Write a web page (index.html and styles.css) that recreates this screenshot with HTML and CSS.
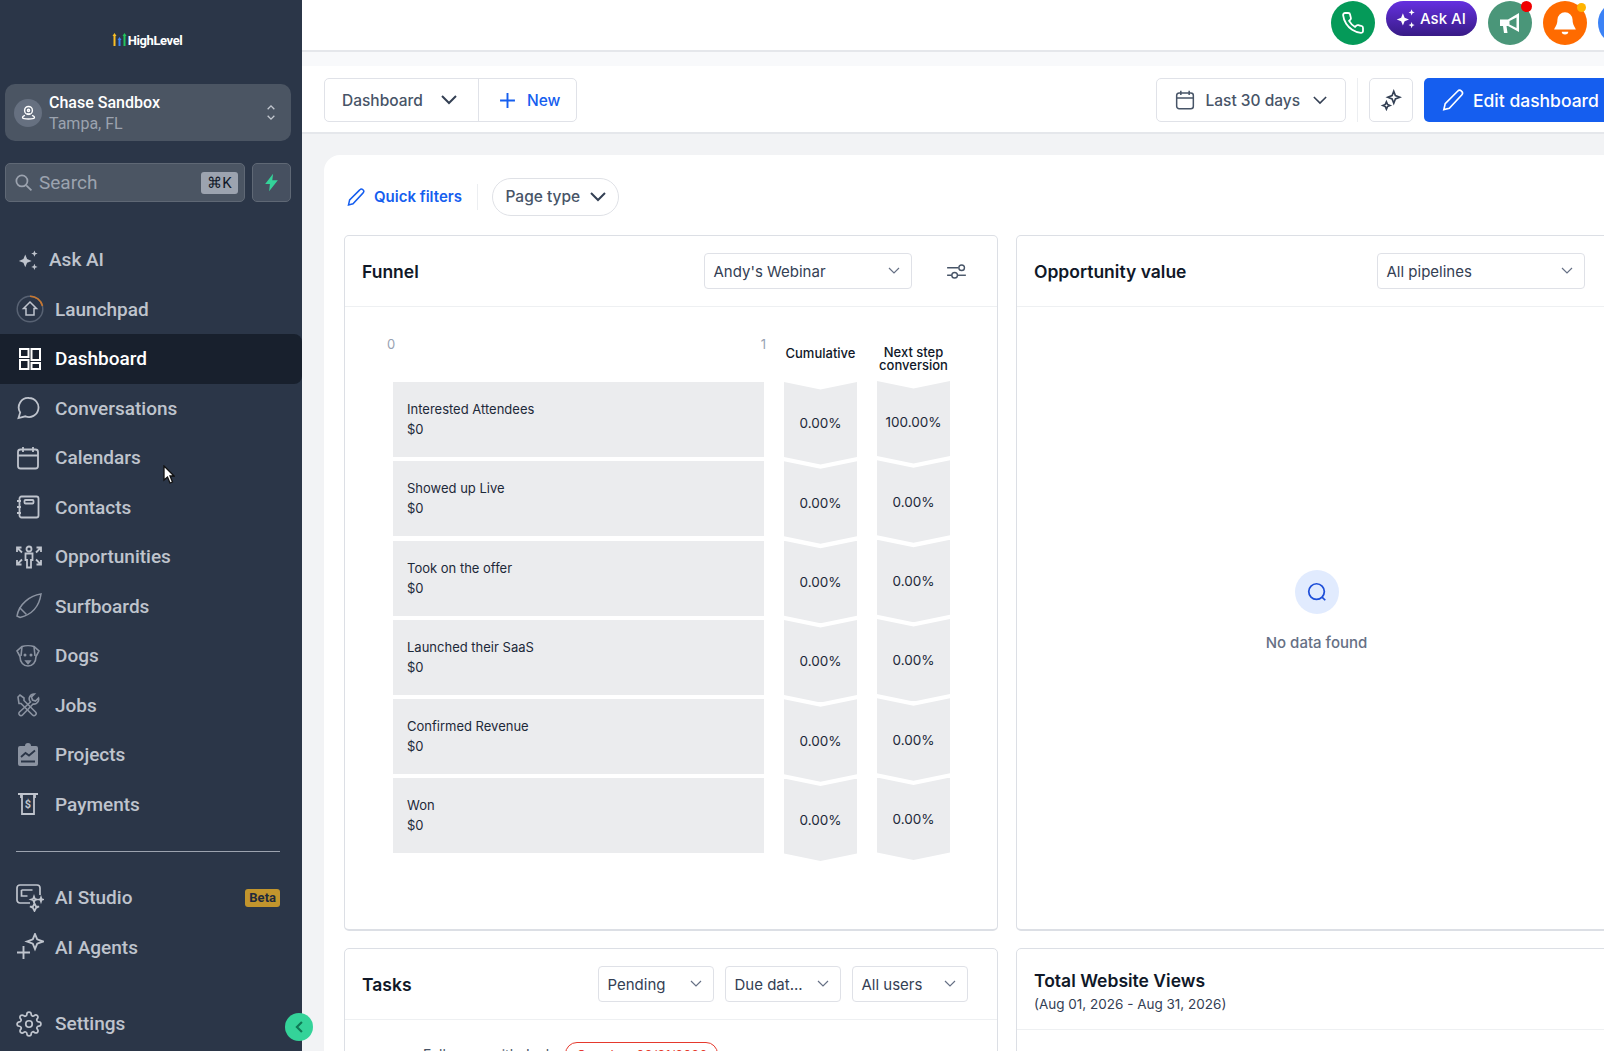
FILE: index.html
```html
<!DOCTYPE html>
<html lang="en">
<head>
  <meta charset="UTF-8" />
  <title>Dashboard</title>
  <link rel="stylesheet" href="styles.css">
</head>
<body>
<div class="app">

  <!-- Sidebar -->
  <aside class="sidebar">
    <div class="logo">
      <svg class="logo-mark" viewBox="0 0 15 14" width="15" height="14" fill="none" stroke-width="2">
        <path d="M2.5 14V3" stroke="#fbbf24"/><path d="M0.5 4l2-3 2 3z" fill="#fbbf24"/>
        <path d="M7.5 14V7" stroke="#3b82f6"/><path d="M5.5 8l2-3 2 3z" fill="#3b82f6"/>
        <path d="M12.5 14V3" stroke="#22c55e"/><path d="M10.5 4l2-3 2 3z" fill="#22c55e"/>
      </svg>
      <span>HighLevel</span>
    </div>

    <div class="location">
      <span class="location-pin">
        <svg viewBox="0 0 24 24" width="17" height="17" fill="none" stroke="#fff" stroke-width="2"><circle cx="12" cy="9" r="5.5"/><circle cx="12" cy="9" r="1.5"/><path d="M12 15l-2-1.5M12 15l2-1.5M7 16c-3 1-4 2.500-3 4 1 1.500 15 1.500 16 0 1-1.500 0-3-3-4"/></svg>
      </span>
      <div class="location-text">
        <div class="location-name">Chase Sandbox</div>
        <div class="location-city">Tampa, FL</div>
      </div>
      <svg class="location-toggle" viewBox="0 0 12 22" width="10" height="19" fill="none" stroke="#c3c8d0" stroke-width="1.6"><path d="M2 7l4-4 4 4M2 15l4 4 4-4"/></svg>
    </div>

    <div class="search-row">
      <div class="search">
        <svg viewBox="0 0 24 24" width="19" height="19" fill="none" stroke="#9ca3af" stroke-width="2.200"><circle cx="10" cy="10" r="7"/><path d="M15.500 15.500L22 22"/></svg>
        <span class="search-label">Search</span>
        <span class="kbd">⌘K</span>
      </div>
      <button class="bolt">
        <svg viewBox="0 0 24 24" width="19" height="19" fill="#34d399"><path d="M14 1L4 14h6l-1 9 11-14h-7z"/></svg>
      </button>
    </div>

    <nav class="nav">
      <a class="nav-item nav-ask">
        <span class="nav-icon"><svg viewBox="0 0 24 24" width="22" height="22" fill="currentColor"><path d="M9 6l2 5 5 2-5 2-2 5-2-5-5-2 5-2z"/><path d="M19 1.500l1 2.500 2.500 1-2.500 1-1 2.500-1-2.500-2.500-1 2.500-1zM19 16l1 2.500 2.500 1-2.500 1-1 2.500-1-2.500-2.500-1 2.500-1z"/></svg></span>
        Ask AI
      </a>
      <a class="nav-item">
        <span class="nav-icon"><svg viewBox="0 0 28 28" width="28" height="28" fill="none" stroke-width="1.500"><circle cx="14" cy="14" r="12.800" stroke="#586273"/><path d="M14 1.200A12.800 12.800 0 0 1 26.500 11" stroke="#c8772f"/><path d="M14 7l6.500 6.500H18V20h-8v-6.500H7.500z" stroke="currentColor"/></svg></span>
        Launchpad
      </a>
      <a class="nav-item active">
        <span class="nav-icon"><svg viewBox="0 0 24 24" width="24" height="24" fill="none" stroke="currentColor" stroke-width="2"><rect x="2" y="2" width="8.500" height="8"/><rect x="13.500" y="2" width="8.500" height="11"/><rect x="2" y="13" width="8.500" height="9"/><rect x="13.500" y="16" width="8.500" height="6"/></svg></span>
        Dashboard
      </a>
      <a class="nav-item">
        <span class="nav-icon"><svg viewBox="0 0 24 24" width="24" height="24" fill="none" stroke="currentColor" stroke-width="1.800"><path d="M13 2a9.500 9.500 0 1 1-3.600 18.300L2.500 22l1.700-5.500A9.500 9.500 0 0 1 13 2z"/></svg></span>
        Conversations
      </a>
      <a class="nav-item">
        <span class="nav-icon"><svg viewBox="0 0 24 24" width="24" height="24" fill="none" stroke="currentColor" stroke-width="1.800"><rect x="2" y="3.500" width="20" height="19" rx="2.500"/><path d="M2 9.500h20M7 1v5M17 1v5"/></svg></span>
        Calendars
      </a>
      <a class="nav-item">
        <span class="nav-icon"><svg viewBox="0 0 24 24" width="24" height="24" fill="none" stroke="currentColor" stroke-width="1.800"><rect x="3.500" y="1.500" width="19" height="21" rx="2"/><rect x="8.500" y="5" width="9" height="3.500" rx="1"/><path d="M1 6h4M1 12h4M1 18h4"/></svg></span>
        Contacts
      </a>
      <a class="nav-item">
        <span class="nav-icon"><svg viewBox="0 0 26 26" width="26" height="26" fill="none" stroke="currentColor" stroke-width="1.800"><circle cx="13" cy="5" r="2.500"/><path d="M9.500 9.500h7V16H15v7.500h-4V16H9.500zM1 8V3.500h4.500M1.500 4L6 8.500M25 8V3.500h-4.500M24.500 4L20 8.500M1 16v4.500h4.500M1.500 20L6 15.500M25 16v4.500h-4.500M24.500 20L20 15.500"/></svg></span>
        Opportunities
      </a>
      <a class="nav-item">
        <span class="nav-icon nav-dim"><svg viewBox="0 0 26 26" width="26" height="26" fill="none" stroke="currentColor" stroke-width="1.500"><path d="M1 23l3 1.500C14 22 23 15 25 1 14 2.500 3 11 1 23z"/><path d="M3.500 14.500l7 7"/></svg></span>
        Surfboards
      </a>
      <a class="nav-item">
        <span class="nav-icon nav-dim"><svg viewBox="0 0 24 24" width="24" height="24" fill="none" stroke="currentColor" stroke-width="1.600"><path d="M6 2.500c3-1 9-1 12 0l5 4.500-3 5.500c0 6-3.500 9.500-8 9.500s-8-3.500-8-9.500L1 7z"/><path d="M6 2.500L5 12M18 2.500l1 9.500M10 17h4l-2 2.500z"/><circle cx="9" cy="11" r=".7"/><circle cx="15" cy="11" r=".7"/></svg></span>
        Dogs
      </a>
      <a class="nav-item">
        <span class="nav-icon nav-dim"><svg viewBox="0 0 24 24" width="24" height="24" fill="none" stroke="currentColor" stroke-width="1.600"><path d="M2 4l2-2 4 3v2.500l11.500 11.500a2 2 0 0 1-3 3L5 10.500H3z"/><path d="M14.500 9L3.500 19a2 2 0 0 0 3 3L17 11a4.800 4.800 0 0 0 5.500-6l-3 3-3-1-1-3 3-3a4.800 4.800 0 0 0-4 8z"/></svg></span>
        Jobs
      </a>
      <a class="nav-item">
        <span class="nav-icon nav-dim"><svg viewBox="0 0 24 24" width="24" height="24"><path fill="currentColor" d="M4 3h5a3 3 0 0 1 6 0h5a2 2 0 0 1 2 2v16a2 2 0 0 1-2 2H4a2 2 0 0 1-2-2V5a2 2 0 0 1 2-2z"/><path fill="none" stroke="#2b3648" stroke-width="1.800" d="M5 14l4.500-4 3.500 2.500L19 7.500M5 18.500h14"/></svg></span>
        Projects
      </a>
      <a class="nav-item">
        <span class="nav-icon"><svg viewBox="0 0 24 24" width="24" height="24" fill="none" stroke="currentColor" stroke-width="1.800"><path d="M2 2h20M5 2v4M19 2v4M6 2v20h12V2"/><text x="12" y="16" text-anchor="middle" fill="currentColor" stroke="none" font-size="11" font-weight="700" font-family="Roboto, sans-serif">$</text></svg></span>
        Payments
      </a>

      <div class="nav-divider"></div>

      <a class="nav-item">
        <span class="nav-icon"><svg viewBox="0 0 28 28" width="28" height="28" fill="none" stroke="currentColor" stroke-width="1.700"><path d="M14 19H4a3 3 0 0 1-3-3V4a3 3 0 0 1 3-3h17a3 3 0 0 1 3 3v7"/><path d="M5.500 6h11M5.500 6v6h6"/><path d="M18 13l.8 2.200 2.200.8-2.200.8-.8 2.200-.8-2.200-2.200-.8 2.200-.8zM25 14l.5 1.500 1.500.5-1.500.5-.5 1.500-.5-1.500-1.500-.5 1.500-.5zM18.500 20l1.500 3 3-.0-3 1.500-1.500 3-1.500-3-3-1.500 3 .0z" transform="translate(0 -.5)"/></svg></span>
        AI Studio
        <span class="beta">Beta</span>
      </a>
      <a class="nav-item">
        <span class="nav-icon"><svg viewBox="0 0 28 28" width="28" height="28" fill="none" stroke="currentColor" stroke-width="1.900"><path d="M19 1l2.200 5.300L27 8.500l-5.800 2.200L19 16l-2.200-5.300L11 8.500l5.800-2.200z"/><path d="M7.500 13v13M1 19.500h13"/></svg></span>
        AI Agents
      </a>
      <a class="nav-item nav-settings">
        <span class="nav-icon"><svg viewBox="0 0 24 24" width="26" height="26" fill="none" stroke="currentColor" stroke-width="1.600"><circle cx="12" cy="12" r="3"/><path d="M19.400 15a1.650 1.650 0 0 0 .33 1.820l.06.06a2 2 0 0 1 0 2.830 2 2 0 0 1-2.830 0l-.06-.06a1.650 1.650 0 0 0-1.820-.33 1.650 1.650 0 0 0-1 1.510V21a2 2 0 0 1-2 2 2 2 0 0 1-2-2v-.09A1.650 1.650 0 0 0 9 19.400a1.650 1.650 0 0 0-1.820.33l-.06.06a2 2 0 0 1-2.830 0 2 2 0 0 1 0-2.830l.06-.06a1.650 1.650 0 0 0 .33-1.820 1.650 1.650 0 0 0-1.510-1H3a2 2 0 0 1-2-2 2 2 0 0 1 2-2h.09A1.650 1.650 0 0 0 4.600 9a1.650 1.650 0 0 0-.33-1.820l-.06-.06a2 2 0 0 1 0-2.830 2 2 0 0 1 2.830 0l.06.06a1.650 1.650 0 0 0 1.820.33H9a1.650 1.650 0 0 0 1-1.510V3a2 2 0 0 1 2-2 2 2 0 0 1 2 2v.09a1.650 1.650 0 0 0 1 1.510 1.650 1.650 0 0 0 1.820-.33l.06-.06a2 2 0 0 1 2.830 0 2 2 0 0 1 0 2.830l-.06.06a1.650 1.650 0 0 0-.33 1.820V9a1.650 1.650 0 0 0 1.510 1H21a2 2 0 0 1 2 2 2 2 0 0 1-2 2h-.09a1.650 1.650 0 0 0-1.510 1z"/></svg></span>
        Settings
      </a>
    </nav>

    <button class="collapse">
      <svg viewBox="0 0 12 16" width="10" height="14" fill="none" stroke="#0f7a55" stroke-width="2.600"><path d="M9.500 2l-6 6 6 6"/></svg>
    </button>
  </aside>

  <!-- Main -->
  <main class="main">
    <header class="topbar">
      <span class="round round-phone">
        <svg viewBox="0 0 24 24" width="24" height="24" fill="none" stroke="#fff" stroke-width="1.800"><path d="M22 16.920v3a2 2 0 0 1-2.180 2 19.790 19.790 0 0 1-8.630-3.070 19.500 19.500 0 0 1-6-6 19.790 19.790 0 0 1-3.070-8.670A2 2 0 0 1 4.110 2h3a2 2 0 0 1 2 1.720 12.840 12.840 0 0 0 .7 2.810 2 2 0 0 1-.45 2.110L8.090 9.910a16 16 0 0 0 6 6l1.270-1.270a2 2 0 0 1 2.110-.45 12.840 12.840 0 0 0 2.810.7A2 2 0 0 1 22 16.920z"/></svg>
      </span>
      <span class="ask-pill">
        <svg viewBox="0 0 24 24" width="21" height="21" fill="#fff"><path d="M9 6l2 5 5 2-5 2-2 5-2-5-5-2 5-2z"/><path d="M19 1.500l1 2.500 2.500 1-2.500 1-1 2.500-1-2.500-2.500-1 2.500-1zM19 16l1 2.500 2.500 1-2.500 1-1 2.500-1-2.500-2.500-1 2.500-1z"/></svg>
        Ask AI
      </span>
      <span class="round round-news">
        <svg viewBox="0 0 24 24" width="24" height="24" fill="#fff"><path d="M2 8.500h8L21 2v19l-11-6H8.500l1 7H6l-1-7H2z"/><path d="M18.500 6.500L11.500 10v3.500l7 3.500z" fill="#4a9679"/></svg>
        <i class="dot dot-red"></i>
      </span>
      <span class="round round-bell">
        <svg viewBox="0 0 24 24" width="26" height="26" fill="#fff"><path d="M12 2a7 7 0 0 0-7 7c0 5-2.500 7-3 9h20c-.5-2-3-4-3-9a7 7 0 0 0-7-7z"/><path d="M9 20h6a3 2.500 0 0 1-6 0z"/></svg>
        <i class="dot dot-amber"></i>
      </span>
      <span class="round round-user"></span>
    </header>
    <div class="strip"></div>

    <div class="toolbar">
      <div class="split">
        <button class="split-main">
          Dashboard
          <svg viewBox="0 0 16 10" width="16" height="10" fill="none" stroke="#344054" stroke-width="2"><path d="M1 1l7 7 7-7"/></svg>
        </button>
        <button class="split-new">
          <svg viewBox="0 0 16 16" width="17" height="17" fill="none" stroke="#155eef" stroke-width="1.800"><path d="M8 1v14M1 8h14"/></svg>
          New
        </button>
      </div>
      <div class="toolbar-right">
        <button class="range">
          <svg viewBox="0 0 24 24" width="20" height="20" fill="none" stroke="#475467" stroke-width="1.800"><rect x="2" y="3.500" width="20" height="19" rx="3"/><path d="M2 9.500h20M7 1v5M17 1v5"/></svg>
          Last 30 days
          <svg viewBox="0 0 16 10" width="14" height="9" fill="none" stroke="#344054" stroke-width="1.800"><path d="M1 1l7 7 7-7"/></svg>
        </button>
        <span class="toolbar-sep"></span>
        <button class="magic">
          <svg viewBox="0 0 24 24" width="22" height="22" fill="none" stroke="#344054" stroke-width="1.800"><path d="M15 2.500l1.800 4.700 4.700 1.800-4.700 1.800L15 15.500l-1.800-4.700L8.500 9l4.700-1.800zM7 14l1.200 2.800L11 18l-2.800 1.200L7 22l-1.200-2.800L3 18l2.800-1.200z"/></svg>
        </button>
        <button class="edit">
          <svg viewBox="0 0 24 24" width="22" height="22" fill="none" stroke="#fff" stroke-width="1.800"><path d="M17 2.500a3 3 0 0 1 4.500 4L8 21l-6 1.500L3.500 16z"/></svg>
          Edit dashboard
        </button>
      </div>
    </div>

    <section class="panel">
      <div class="filters">
        <a class="quick">
          <svg viewBox="0 0 24 24" width="18" height="18" fill="none" stroke="#155eef" stroke-width="2"><path d="M17 2.500a3 3 0 0 1 4.500 4L8 21l-6 1.500L3.500 16z"/></svg>
          Quick filters
        </a>
        <span class="filters-sep"></span>
        <button class="pill">
          Page type
          <svg viewBox="0 0 16 10" width="16" height="10" fill="none" stroke="#344054" stroke-width="2"><path d="M1 1l7 7 7-7"/></svg>
        </button>
      </div>

      <div class="cards">
        <!-- Funnel -->
        <div class="card card-tall">
          <div class="card-head">
            <h3>Funnel</h3>
            <div class="head-tools">
              <div class="select select-wide">Andy's Webinar<svg viewBox="0 0 12 8" width="12" height="8" fill="none" stroke="#667085" stroke-width="1.200"><path d="M1 1l5 5 5-5"/></svg></div>
              <svg class="tune" viewBox="0 0 20 16" width="19" height="15" fill="none" stroke="#475467" stroke-width="1.500"><path d="M0 4h12M0 12h5"/><circle cx="15.500" cy="4" r="3"/><circle cx="8" cy="12" r="3"/><path d="M11 12h9"/></svg>
            </div>
          </div>
          <div class="funnel">
            <div class="funnel-bars">
              <div class="axis"><span>0</span><span>1</span></div>
              <div class="bar"><span>Interested Attendees</span><span>$0</span></div>
              <div class="bar"><span>Showed up Live</span><span>$0</span></div>
              <div class="bar"><span>Took on the offer</span><span>$0</span></div>
              <div class="bar"><span>Launched their SaaS</span><span>$0</span></div>
              <div class="bar"><span>Confirmed Revenue</span><span>$0</span></div>
              <div class="bar"><span>Won</span><span>$0</span></div>
            </div>
            <div class="funnel-col">
              <div class="col-head">Cumulative</div>
              <div class="chev">0.00%</div>
              <div class="chev">0.00%</div>
              <div class="chev">0.00%</div>
              <div class="chev">0.00%</div>
              <div class="chev">0.00%</div>
              <div class="chev">0.00%</div>
            </div>
            <div class="funnel-col funnel-col-next">
              <div class="col-head">Next step<br>conversion</div>
              <div class="chev">100.00%</div>
              <div class="chev">0.00%</div>
              <div class="chev">0.00%</div>
              <div class="chev">0.00%</div>
              <div class="chev">0.00%</div>
              <div class="chev">0.00%</div>
            </div>
          </div>
        </div>

        <!-- Opportunity value -->
        <div class="card card-tall">
          <div class="card-head">
            <h3>Opportunity value</h3>
            <div class="select select-wide">All pipelines<svg viewBox="0 0 12 8" width="12" height="8" fill="none" stroke="#667085" stroke-width="1.200"><path d="M1 1l5 5 5-5"/></svg></div>
          </div>
          <div class="empty">
            <span class="empty-icon">
              <svg viewBox="0 0 24 24" width="22" height="22" fill="none" stroke="#1d4ed8" stroke-width="1.900"><circle cx="11.500" cy="11.500" r="8.500"/><path d="M17.500 17.500L21 21"/></svg>
            </span>
            <span class="empty-text">No data found</span>
          </div>
        </div>

        <!-- Tasks -->
        <div class="card">
          <div class="card-head card-head-tasks">
            <h3>Tasks</h3>
            <div class="head-tools head-tools-tight">
              <div class="select">Pending<svg viewBox="0 0 12 8" width="12" height="8" fill="none" stroke="#667085" stroke-width="1.200"><path d="M1 1l5 5 5-5"/></svg></div>
              <div class="select">Due dat...<svg viewBox="0 0 12 8" width="12" height="8" fill="none" stroke="#667085" stroke-width="1.200"><path d="M1 1l5 5 5-5"/></svg></div>
              <div class="select">All users<svg viewBox="0 0 12 8" width="12" height="8" fill="none" stroke="#667085" stroke-width="1.200"><path d="M1 1l5 5 5-5"/></svg></div>
            </div>
          </div>
          <div class="task">
            <span class="task-name">Follow up with Jack</span>
            <span class="task-due">Overdue: 08/31/2026</span>
          </div>
        </div>

        <!-- Total Website Views -->
        <div class="card">
          <div class="card-head card-head-views">
            <h3>Total Website Views</h3>
            <p>(Aug 01, 2026 - Aug 31, 2026)</p>
          </div>
        </div>
      </div>
    </section>
  </main>
</div>

<!-- mouse pointer caught in the capture -->
<svg class="pointer" viewBox="0 0 12 19" width="12" height="19"><path d="M1 1v14l3.500-3 2.500 6 2.500-1-2.500-6H11z" fill="#fff" stroke="#111" stroke-width="1.300"/></svg>

</body>
</html>
```

FILE: styles.css
```css
* {
  box-sizing: border-box;
}
html, body {
  margin: 0;
  padding: 0;
  height: 100%;
  overflow: hidden;
  font-family: 'Inter', 'Liberation Sans', sans-serif;
  background-color: #f2f3f5;
  color: #101828;
}
button {
  font-family: inherit;
  cursor: pointer;
}
h3 {
  margin: 0;
  font-size: 17.5px;
  font-weight: 600;
  color: #101828;
}
.app {
  display: flex;
  height: 1051px;
  width: 1642px;
}

/* sidebar */
.sidebar {
  position: relative;
  z-index: 2;
  flex: 0 0 302px;
  background-color: #2b3648;
  font-family: 'Roboto', 'Liberation Sans', sans-serif;
}
.logo {
  height: 84px;
  padding: 0 8px 4px 0;
  display: flex;
  align-items: center;
  justify-content: center;
  gap: 1px;
  color: #fff;
  font-size: 13px;
  font-weight: 700;
  letter-spacing: -0.4px;
}
.logo-mark {
  margin-top: -3px;
}
.location {
  margin: 0 11px 0 5px;
  height: 57px;
  padding: 0 15px 0 9px;
  display: flex;
  align-items: center;
  border-radius: 10px;
  background-color: #4b5563;
}
.location-pin {
  width: 28px;
  height: 28px;
  border-radius: 50%;
  background-color: #667080;
  display: flex;
  align-items: center;
  justify-content: center;
}
.location-text {
  flex: 1;
  margin-left: 7px;
  font-size: 16px;
  line-height: 21px;
}
.location-name {
  color: #fff;
  font-weight: 500;
}
.location-city {
  color: #9ca3af;
}
.search-row {
  margin: 22px 11px 0 5px;
  display: flex;
  gap: 7px;
}
.search {
  flex: 1;
  height: 39px;
  padding: 0 6px 0 8px;
  display: flex;
  align-items: center;
  border: 1px solid #5f6875;
  border-radius: 5px;
  background-color: #4b5563;
}
.search-label {
  flex: 1;
  margin-left: 6px;
  font-size: 19px;
  color: #9ca3af;
}
.kbd {
  height: 22px;
  width: 37px;
  border-radius: 3px;
  background-color: #9ca3af;
  color: #111827;
  font-size: 15px;
  line-height: 22px;
  text-align: center;
}
.bolt {
  width: 39px;
  height: 39px;
  padding: 0;
  display: flex;
  align-items: center;
  justify-content: center;
  border: 1px solid #5f6875;
  border-radius: 5px;
  background-color: #465060;
}
.nav {
  margin-top: 33px;
}
.nav-item {
  height: 49.5px;
  padding: 0 22px 0 16px;
  display: flex;
  align-items: center;
  color: #bfc4cd;
  font-size: 19px;
  font-weight: 500;
}
.nav-item.active {
  color: #fff;
  background-color: #18202d;
  border-radius: 0 8px 8px 0;
}
.nav-icon {
  flex: 0 0 39px;
  display: flex;
  align-items: center;
  color: #bfc4cd;
}
.nav-item.active .nav-icon {
  color: #fff;
  padding-left: 2px;
}
.nav-dim {
  color: #8b93a1;
}
.nav-ask .nav-icon {
  flex-basis: 33px;
  padding-left: 1px;
}
.nav-divider {
  margin: 21.5px 22px 21px 16px;
  height: 1.5px;
  background-color: #9ca3af;
}
.nav-settings {
  margin-top: 27px;
}
.beta {
  margin-left: auto;
  padding: 0 4px;
  height: 18px;
  border-radius: 3px;
  background-color: #c2952d;
  color: #1f2a3c;
  font-size: 13px;
  font-weight: 700;
  line-height: 18px;
}
.collapse {
  position: absolute;
  left: 285px;
  top: 1013px;
  width: 28px;
  height: 28px;
  padding: 0;
  border: none;
  border-radius: 50%;
  background-color: #34d399;
  display: flex;
  align-items: center;
  justify-content: center;
}

/* main column */
.main {
  flex: 0 0 1340px;
  display: flex;
  flex-direction: column;
  min-width: 0;
}
.topbar {
  height: 52px;
  padding-top: 1px;
  display: flex;
  justify-content: flex-end;
  gap: 11px;
  background-color: #fff;
  border-bottom: 2px solid #e5e7eb;
}
.round {
  position: relative;
  width: 44px;
  height: 44px;
  border-radius: 50%;
  display: flex;
  align-items: center;
  justify-content: center;
}
.round-phone { background-color: #059a59; }
.round-news { background-color: #4a9679; }
.round-bell { background-color: #ff6b00; }
.round-user { background-color: #3b82f6; }
.dot {
  position: absolute;
  border-radius: 50%;
}
.dot-red {
  top: 0;
  right: 0;
  width: 11px;
  height: 11px;
  background-color: #f00000;
}
.dot-amber {
  top: 2px;
  right: 1px;
  width: 9px;
  height: 9px;
  background-color: #ffb400;
}
.ask-pill {
  width: 91px;
  height: 35px;
  padding-left: 9px;
  display: flex;
  align-items: center;
  gap: 4px;
  border-radius: 18px;
  background: linear-gradient(#6530e0, #381b86);
  color: #fff;
  font-size: 15px;
  font-weight: 500;
}
.strip {
  height: 14px;
  background-color: #f8f9fb;
}
.toolbar {
  height: 68px;
  padding: 12px 25px 0 22px;
  display: flex;
  justify-content: space-between;
  background-color: #fff;
  border-bottom: 2px solid #e5e7eb;
}
.split {
  display: flex;
  height: 44px;
  border: 1.500px solid #e0e2e8;
  border-radius: 5px;
}
.split button {
  height: 100%;
  border: none;
  background: none;
  display: flex;
  align-items: center;
  font-size: 15.5px;
  font-weight: 500;
}
.split-main {
  width: 154px;
  padding: 0 0 0 17px;
  gap: 18px;
  color: #475467;
  border-right: 1.500px solid #e0e2e8 !important;
}
.split-new {
  width: 97px;
  padding: 0 0 0 20px;
  gap: 11px;
  color: #155eef;
}
.toolbar-right {
  display: flex;
  align-items: center;
  height: 44px;
}
.range {
  width: 190px;
  height: 44px;
  padding: 0 0 0 18px;
  display: flex;
  align-items: center;
  gap: 11px;
  border: 1.500px solid #e0e2e8;
  border-radius: 5px;
  background: #fff;
  color: #475467;
  font-size: 15.5px;
  font-weight: 500;
}
.range svg:last-child {
  margin-left: 2px;
}
.toolbar-sep {
  width: 1.500px;
  height: 44px;
  margin: 0 11px;
  background-color: #eceef1;
}
.magic {
  width: 44px;
  height: 44px;
  padding: 0;
  display: flex;
  align-items: center;
  justify-content: center;
  border: 1.500px solid #e0e2e8;
  border-radius: 5px;
  background: #fff;
}
.edit {
  width: 193px;
  height: 44px;
  margin-left: 11px;
  padding: 0 0 0 18px;
  display: flex;
  align-items: center;
  gap: 9px;
  border: none;
  border-radius: 5px;
  background-color: #155eef;
  color: #fff;
  font-size: 17.5px;
  font-weight: 500;
}

/* white panel */
.panel {
  flex: 1;
  margin: 21px 0 0 22px;
  padding: 0 25px 0 20px;
  overflow: hidden;
  border-radius: 16px 0 0 0;
  background-color: #fff;
}
.filters {
  height: 80px;
  padding-top: 3px;
  display: flex;
  align-items: center;
}
.quick {
  display: flex;
  align-items: center;
  gap: 9px;
  margin-left: 3px;
  color: #155eef;
  font-size: 15px;
  font-weight: 600;
}
.filters-sep {
  width: 1.500px;
  height: 26px;
  margin: 0 14px 0 15px;
  background-color: #eceef1;
}
.pill {
  width: 127px;
  height: 38px;
  padding: 0 0 0 12px;
  display: flex;
  align-items: center;
  gap: 10px;
  border: 1.500px solid #dfe1e6;
  border-radius: 19px;
  background: #fff;
  color: #475467;
  font-size: 15.500px;
  font-weight: 500;
}
.cards {
  display: grid;
  grid-template-columns: 654px 1fr;
  column-gap: 18px;
  row-gap: 17px;
}
.card {
  border: 1.500px solid #dcdfe5;
  border-radius: 5px;
  background-color: #fff;
}
.card-tall {
  height: 696px;
  border-bottom-width: 2px;
}
.card-head {
  height: 71px;
  padding: 0 31px 0 17px;
  display: flex;
  align-items: center;
  justify-content: space-between;
  border-bottom: 1.500px solid #eef0f2;
}
.card-head-tasks {
  padding-right: 29px;
}
.card-head-views {
  height: 81px;
  padding-top: 3px;
  flex-direction: column;
  align-items: flex-start;
  justify-content: center;
  gap: 5px;
}
.card-head-views p {
  margin: 0;
  font-size: 13.500px;
  color: #344054;
}
.head-tools {
  display: flex;
  align-items: center;
  gap: 35px;
}
.head-tools-tight {
  gap: 11px;
}
.select {
  width: 116px;
  height: 36px;
  padding: 0 11px 0 8.500px;
  display: flex;
  align-items: center;
  justify-content: space-between;
  border: 1.500px solid #dfe1e7;
  border-radius: 4px;
  font-size: 15px;
  color: #344054;
}
.select-wide {
  width: 208px;
}

/* funnel chart */
.funnel {
  padding-left: 48px;
  display: flex;
  gap: 20px;
}
.funnel-bars {
  width: 371px;
}
.axis {
  height: 75px;
  margin: 0 -2px 0 -6px;
  padding-top: 28px;
  display: flex;
  justify-content: space-between;
  font-size: 13px;
  line-height: 18px;
  color: #98a2b3;
}
.bar {
  height: 75px;
  margin-bottom: 4.300px;
  padding-left: 14px;
  display: flex;
  flex-direction: column;
  justify-content: center;
  gap: 5px;
  background-color: #ebecee;
  font-size: 13px;
  line-height: 15px;
  color: #1d2939;
}
.funnel-col {
  width: 73px;
}
.funnel-col-next {
  margin-top: -1px;
}
.col-head {
  height: 75px;
  padding-top: 40px;
  font-size: 13px;
  font-weight: 500;
  line-height: 13px;
  text-align: center;
  white-space: nowrap;
}
.chev {
  height: 82.500px;
  margin-bottom: -3.200px;
  display: flex;
  align-items: center;
  justify-content: center;
  background-color: #ebecee;
  clip-path: polygon(0 0, 50% 7.500px, 100% 0, 100% 75px, 50% 100%, 0 75px);
  font-size: 13.500px;
  color: #1d2939;
}

/* empty state */
.empty {
  height: 600px;
  padding-top: 263px;
  display: flex;
  flex-direction: column;
  align-items: center;
  gap: 19px;
}
.empty-icon {
  width: 44px;
  height: 44px;
  border-radius: 50%;
  background-color: #e1ebfe;
  display: flex;
  align-items: center;
  justify-content: center;
}
.empty-text {
  font-size: 15px;
  font-weight: 500;
  color: #667085;
}

/* tasks */
.task {
  padding: 22px 0 0 78px;
  display: flex;
  align-items: flex-start;
  gap: 12px;
}
.task-name {
  font-size: 14px;
  color: #475467;
  padding-top: 4px;
}
.task-due {
  height: 24px;
  padding: 4px 10px;
  border: 1px solid #e5392d;
  border-radius: 12px;
  font-size: 13px;
  color: #e5392d;
}

.pointer {
  position: absolute;
  left: 163px;
  top: 465px;
  z-index: 3;
}
```
